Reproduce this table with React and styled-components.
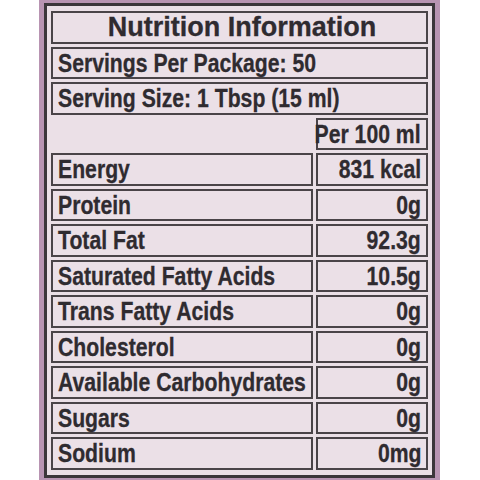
import React from 'react';
import styled, {createGlobalStyle} from 'styled-components';

const GlobalStyle = createGlobalStyle`
  html, body {
    margin: 0;
    padding: 0;
    background: #ffffff;
  }
`;

const Page = styled.div`
  width: 480px;
  height: 480px;
  display: flex;
  justify-content: flex-start;
`;

const Frame = styled.div`
  margin-left: 39px;
  width: 401px;
  height: 480px;
  box-sizing: border-box;
  background: #b894b2;
  padding: 3px 5px 2px 5px;
`;

const Panel = styled.div`
  height: 100%;
  box-sizing: border-box;
  border: 3px solid #3b363a;
  background: #ebe0e7;
  padding: 5px 4px 5px 4px;
`;

const Table = styled.div`
  height: 100%;
  display: grid;
  grid-template-columns: 262px minmax(0, 1fr);
  grid-auto-rows: minmax(0, 1fr);
  gap: 3px;
  font-family: "Liberation Sans", Arial, sans-serif;
  font-weight: bold;
  color: #2f2b30;
  -webkit-text-stroke: 0.3px #2f2b30;
`;

const Cell = styled.div`
  box-sizing: border-box;
  min-width: 0;
  border: ${p => (p.$empty ? 'none' : '2px solid #4a4448')};
  grid-column: ${p => (p.$wide ? '1 / span 2' : 'auto')};
  display: flex;
  align-items: center;
  justify-content: ${p => (p.$right ? 'flex-end' : p.$center ? 'center' : 'flex-start')};
  padding: ${p => (p.$right ? '0 5px 0 0' : '0 0 0 5px')};
  font-size: 26.5px;
  line-height: 1;
  white-space: nowrap;
`;

// condensed bold face: squeeze the regular bold horizontally
const Narrow = styled.span`
  display: inline-block;
  transform: scaleX(0.8);
  transform-origin: ${p => (p.$right ? 'right center' : 'left center')};
`;

const Title = styled(Cell)`
  font-size: 27px;
`;

const rows = [
    ['Energy', '831 kcal'],
    ['Protein', '0g'],
    ['Total Fat', '92.3g'],
    ['Saturated Fatty Acids', '10.5g'],
    ['Trans Fatty Acids', '0g'],
    ['Cholesterol', '0g'],
    ['Available Carbohydrates', '0g'],
    ['Sugars', '0g'],
    ['Sodium', '0mg'],
];

const App = () => {
    return (
        <Page>
            <GlobalStyle/>
            <Frame>
                <Panel>
                    <Table>
                        <Title $wide $center>Nutrition Information</Title>
                        <Cell $wide><Narrow>Servings Per Package: 50</Narrow></Cell>
                        <Cell $wide><Narrow>Serving Size: 1 Tbsp (15 ml)</Narrow></Cell>
                        <Cell $empty/>
                        <Cell $right><Narrow $right>Per 100 ml</Narrow></Cell>
                        {rows.map(([name, value]) => (
                            <React.Fragment key={name}>
                                <Cell><Narrow>{name}</Narrow></Cell>
                                <Cell $right><Narrow $right>{value}</Narrow></Cell>
                            </React.Fragment>
                        ))}
                    </Table>
                </Panel>
            </Frame>
        </Page>
    );
};

export default App;
